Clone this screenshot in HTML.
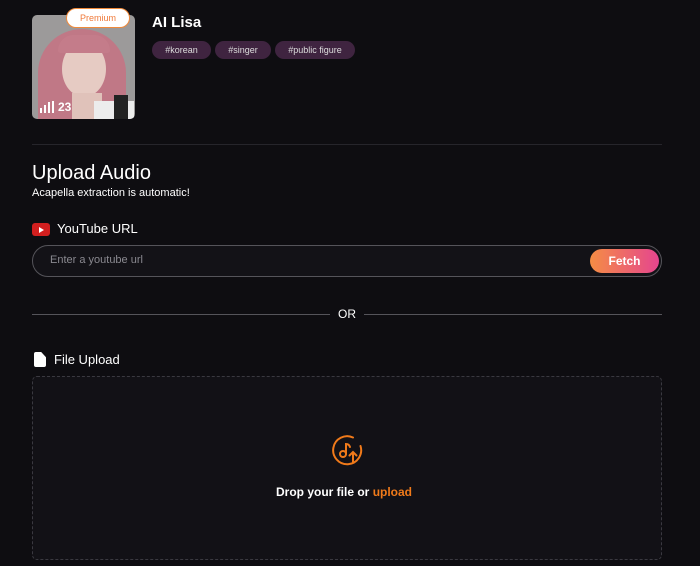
<!DOCTYPE html>
<html><head><meta charset="utf-8"><style>
*{box-sizing:border-box;margin:0;padding:0}
body{width:700px;height:566px;background:#0e0d11;font-family:"Liberation Sans",sans-serif;color:#fff;position:relative;overflow:hidden}
.abs{position:absolute}
.tag{position:absolute;top:41px;height:18px;border-radius:9px;background:#3f2440;color:#ddd;font-size:9px;line-height:18px;text-align:center}
</style></head><body>
<div class="abs" style="left:32px;top:15px;width:103px;height:104px;border-radius:5px;overflow:hidden;background:#9c9a9a">
 <div class="abs" style="left:6px;top:14px;width:88px;height:100px;border-radius:44px 44px 10px 10px;background:#c07886"></div>
 <div class="abs" style="left:30px;top:26px;width:44px;height:56px;border-radius:50%;background:#e6cbc3"></div>
 <div class="abs" style="left:26px;top:20px;width:52px;height:18px;border-radius:26px 26px 4px 4px;background:#c47c8a"></div>
 <div class="abs" style="left:40px;top:78px;width:30px;height:30px;background:#e0c2ba"></div>
 <div class="abs" style="left:62px;top:86px;width:40px;height:20px;background:#ececec"></div>
 <div class="abs" style="left:82px;top:80px;width:14px;height:24px;background:#222"></div>
</div>
<svg class="abs" style="left:40px;top:101px" width="16" height="12"><g fill="#fff"><rect x="0" y="7" width="2" height="5"/><rect x="4" y="4" width="2" height="8"/><rect x="8" y="1" width="2" height="11"/><rect x="12" y="0" width="2" height="12"/></g></svg>
<div class="abs" style="left:58px;top:100px;font-size:12px;font-weight:bold">23</div>
<div class="abs" style="left:66px;top:8px;width:64px;height:20px;border-radius:10px;background:#fff;border:1px solid #f08a3a;color:#f07a3a;font-size:9px;line-height:18px;text-align:center">Premium</div>
<div class="abs" style="left:152px;top:14px;font-size:15px;font-weight:bold">AI Lisa</div>
<div class="tag" style="left:152px;width:59px">#korean</div>
<div class="tag" style="left:215px;width:56px">#singer</div>
<div class="tag" style="left:275px;width:80px">#public figure</div>
<div class="abs" style="left:32px;top:144px;width:630px;height:1px;background:#26252b"></div>
<div class="abs" style="left:32px;top:162px;font-size:20px">Upload Audio</div>
<div class="abs" style="left:32px;top:187px;font-size:11px">Acapella extraction is automatic!</div>
<div class="abs" style="left:32px;top:223px;width:18px;height:13px;border-radius:3px;background:#d21f1f"><div class="abs" style="left:7px;top:4px;border-left:5px solid #fff;border-top:3px solid transparent;border-bottom:3px solid transparent"></div></div>
<div class="abs" style="left:57px;top:221px;font-size:13px">YouTube URL</div>
<div class="abs" style="left:32px;top:245px;width:630px;height:32px;border-radius:16px;border:1px solid #55545a;background:#131217"></div>
<div class="abs" style="left:50px;top:254px;font-size:11px;color:#8a8990">Enter a youtube url</div>
<div class="abs" style="left:590px;top:249px;width:69px;height:24px;border-radius:12px;background:linear-gradient(90deg,#f58d44,#e5458f);font-size:12px;font-weight:bold;line-height:24px;text-align:center">Fetch</div>
<div class="abs" style="left:32px;top:314px;width:298px;height:1px;background:#55545a"></div>
<div class="abs" style="left:364px;top:314px;width:298px;height:1px;background:#55545a"></div>
<div class="abs" style="left:338px;top:307px;font-size:12px">OR</div>
<div class="abs" style="left:34px;top:352px;width:12px;height:15px;background:#fff;border-radius:2px;clip-path:polygon(0 0,60% 0,100% 35%,100% 100%,0 100%)"></div>
<div class="abs" style="left:54px;top:352px;font-size:13px">File Upload</div>
<div class="abs" style="left:32px;top:376px;width:630px;height:184px;border:1px dashed #3a3940;border-radius:5px;background:#121116"></div>
<svg class="abs" style="left:331px;top:434px" width="32" height="32" viewBox="0 0 32 32" fill="none" stroke="#f07a1a" stroke-width="2" stroke-linecap="round"><path d="M22 3.5A14 14 0 1 0 29.5 12"/><circle cx="12" cy="20" r="3"/><path d="M15 20V10q3 0 4 3"/><path d="M22 28V18M18.5 21.5L22 18l3.5 3.5"/></svg>
<div class="abs" style="left:276px;top:485px;font-size:12px;font-weight:bold">Drop your file or <span style="color:#f07a1a">upload</span></div>
</body></html>
